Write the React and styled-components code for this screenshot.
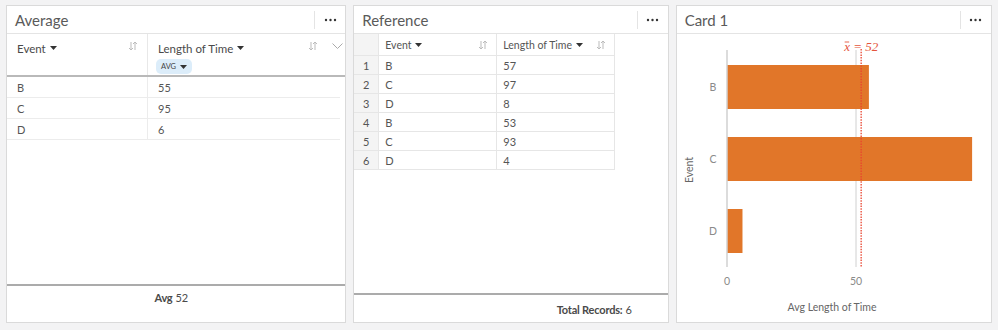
import React from "react";
import styled, { createGlobalStyle } from "styled-components";

const Global = createGlobalStyle`
  html, body { margin: 0; padding: 0; background: #f3f3f4; }
  body { font-family: Lato, "Open Sans", sans-serif; color: #4c4c4c; }
  * { box-sizing: border-box; }
`;

const Page = styled.div`
  display: flex;
  gap: 7px;
  padding: 5px 6px 0 6px;
  height: 330px;
`;

const Card = styled.section`
  width: ${(p) => p.$w}px;
  height: 318px;
  background: #fff;
  border: 1px solid #dadada;
  display: flex;
  flex-direction: column;
  overflow: hidden;
`;

const Header = styled.header`
  height: 28px;
  flex: none;
  display: flex;
  align-items: center;
  border-bottom: 1px solid #e4e4e4;
  padding-left: 8px;
`;

const Title = styled.h2`
  flex: 1;
  margin: 0;
  font-size: 15px;
  font-weight: 400;
  color: #5a5a5a;
`;

const MenuBtn = styled.div`
  width: 31px;
  height: 18px;
  border-left: 1px solid #e4e4e4;
  display: flex;
  align-items: center;
  justify-content: center;
`;

const Dots = () => (
  <svg width="13" height="4" viewBox="0 0 13 4">
    <circle cx="2" cy="2" r="1.2" fill="#333" />
    <circle cx="6.5" cy="2" r="1.2" fill="#333" />
    <circle cx="11" cy="2" r="1.2" fill="#333" />
  </svg>
);

const Caret = () => (
  <svg width="7" height="4" viewBox="0 0 7 4" style={{ marginLeft: 4 }}>
    <path d="M0 0 L7 0 L3.5 4 Z" fill="#333" />
  </svg>
);

const SortIcon = () => (
  <svg width="10" height="10" viewBox="0 0 10 10">
    <path d="M3 1 V9 M1 7 L3 9 L5 7" stroke="#bbb" strokeWidth="1" fill="none" />
    <path d="M7 9 V1 M5 3 L7 1 L9 3" stroke="#bbb" strokeWidth="1" fill="none" />
  </svg>
);

const Chevron = () => (
  <svg width="11" height="7" viewBox="0 0 11 7">
    <path d="M0.5 0.5 L5.5 5.5 L10.5 0.5" stroke="#aaa" strokeWidth="1" fill="none" />
  </svg>
);

const Body = styled.div`
  flex: 1;
  min-height: 0;
  display: flex;
  flex-direction: column;
`;

/* ---------- Summary table ---------- */
const SumHead = styled.div`
  display: grid;
  grid-template-columns: 141px 1fr;
  height: 43px;
  border-bottom: 2px solid #b9b9b9;
`;

const SumHeadCell = styled.div`
  position: relative;
  padding: 6px 8px 0 10px;
  border-right: ${(p) => (p.$last ? "none" : "1px solid #e8e8e8")};
  font-size: 11.5px;
  color: #4a4a4a;
`;

const HeadLabel = styled.div`
  display: flex;
  align-items: center;
  height: 16px;
`;

const HeadIcons = styled.div`
  position: absolute;
  top: 7px;
  right: ${(p) => p.$right}px;
  display: flex;
  align-items: center;
  gap: 14px;
`;

const AggPill = styled.span`
  display: inline-flex;
  align-items: center;
  margin-top: 3px;
  margin-left: -2px;
  padding: 0 5px;
  height: 15px;
  border-radius: 5px;
  background: #dcedfa;
  font-size: 7.5px;
  color: #444;
`;

const SumRows = styled.div`
  width: 333px;
`;

const SumRow = styled.div`
  display: grid;
  grid-template-columns: 141px 1fr;
  height: 21px;
  border-bottom: 1px solid #ececec;
  font-size: 11px;
  color: #555;
`;

const SumCell = styled.div`
  display: flex;
  align-items: center;
  padding-left: 10px;
  border-right: ${(p) => (p.$last ? "none" : "1px solid #ececec")};
`;

const Spacer = styled.div`
  flex: 1;
`;

const Footer = styled.footer`
  flex: none;
  height: ${(p) => p.$h}px;
  border-top: 2px solid #ababab;
  display: flex;
  justify-content: ${(p) => p.$justify};
  align-items: ${(p) => p.$align};
  padding: ${(p) => p.$pad};
  font-size: 11px;
  color: #4a4a4a;
  letter-spacing: -0.2px;
`;

const Strong = styled.b`
  font-weight: 700;
  margin-right: 3px;
`;

/* ---------- Reference table ---------- */
const RefTable = styled.div`
  display: grid;
  grid-template-columns: 25px 118px 118px;
  width: 262px;
`;

const RefCell = styled.div`
  position: relative;
  height: ${(p) => (p.$head ? 22 : 19)}px;
  display: flex;
  align-items: center;
  padding-left: ${(p) => (p.$num ? 0 : 6)}px;
  justify-content: ${(p) => (p.$num ? "center" : "flex-start")};
  background: ${(p) => (p.$num ? "#f4f4f4" : "#fff")};
  border-bottom: 1px solid #e6e6e6;
  border-right: 1px solid #e6e6e6;
  font-size: ${(p) => (p.$head ? 10.5 : 11)}px;
  color: #555;
`;

const RefSort = styled.span`
  position: absolute;
  right: 8px;
  top: 6px;
  display: flex;
`;

/* ---------- Chart ---------- */
const ChartSvg = styled.svg`
  display: block;
  font-family: Lato, "Open Sans", sans-serif;
`;

const summary = [
  ["B", 55],
  ["C", 95],
  ["D", 6],
];
const refRows = [
  ["B", 57],
  ["C", 97],
  ["D", 8],
  ["B", 53],
  ["C", 93],
  ["D", 4],
];

const X0 = 50;
const SCALE = 2.58;
const barTops = [31, 103, 175];

function Chart() {
  const avgX = X0 + 52 * SCALE;
  const gridX = X0 + 50 * SCALE;
  return (
    <ChartSvg width="315" height="287" viewBox="0 0 315 287">
      <line x1={gridX} y1="16" x2={gridX} y2="233" stroke="#d0d0d0" strokeWidth="1" />
      {summary.map(([k, v], i) => (
        <rect key={k} x={X0} y={barTops[i]} width={v * SCALE} height="44" fill="#e17629" />
      ))}
      <line x1={X0} y1="16" x2={X0} y2="233" stroke="#d0d0d0" strokeWidth="1.5" />
      <line
        x1={avgX}
        y1="15"
        x2={avgX}
        y2="233"
        stroke="#e8442f"
        strokeWidth="1.3"
        strokeDasharray="1.5 1.2"
      />
      <text
        x={avgX - 17}
        y="17"
        fontFamily='"Liberation Serif", serif'
        fontStyle="italic"
        fontSize="13"
        fill="#e4553d"
      >
        x = 52
      </text>
      <line x1={avgX - 16.5} y1="8" x2={avgX - 12} y2="8" stroke="#e4553d" strokeWidth="0.9" />
      {summary.map(([k], i) => (
        <text key={k} x="36" y={barTops[i] + 26} textAnchor="middle" fontSize="10.5" fill="#8a8a8a">
          {k}
        </text>
      ))}
      <text x={X0} y="251" textAnchor="middle" fontSize="10.5" fill="#8a8a8a">0</text>
      <text x={gridX} y="251" textAnchor="middle" fontSize="10.5" fill="#8a8a8a">50</text>
      <text x="155" y="277" textAnchor="middle" fontSize="10.5" fill="#666">
        Avg Length of Time
      </text>
      <text
        x="0"
        y="0"
        transform="translate(16 136) rotate(-90)"
        textAnchor="middle"
        fontSize="10.5"
        fill="#666"
      >
        Event
      </text>
    </ChartSvg>
  );
}

export default function App() {
  return (
    <>
      <Global />
      <Page>
        <Card $w={341}>
          <Header>
            <Title>Average</Title>
            <MenuBtn>
              <Dots />
            </MenuBtn>
          </Header>
          <Body>
            <SumHead>
              <SumHeadCell>
                <HeadLabel>
                  Event
                  <Caret />
                </HeadLabel>
                <HeadIcons $right={9}>
                  <SortIcon />
                </HeadIcons>
              </SumHeadCell>
              <SumHeadCell $last>
                <HeadLabel>
                  Length of Time
                  <Caret />
                </HeadLabel>
                <AggPill>
                  AVG
                  <Caret />
                </AggPill>
                <HeadIcons $right={2}>
                  <SortIcon />
                  <Chevron />
                </HeadIcons>
              </SumHeadCell>
            </SumHead>
            <SumRows>
              {summary.map(([k, v]) => (
                <SumRow key={k}>
                  <SumCell>{k}</SumCell>
                  <SumCell $last>{v}</SumCell>
                </SumRow>
              ))}
            </SumRows>
            <Spacer />
            <Footer $h={38} $justify="center" $align="flex-start" $pad="5px 10px 0 0">
              <Strong>Avg</Strong>52
            </Footer>
          </Body>
        </Card>

        <Card $w={316}>
          <Header>
            <Title>Reference</Title>
            <MenuBtn>
              <Dots />
            </MenuBtn>
          </Header>
          <Body>
            <RefTable>
              <RefCell $head $num />
              <RefCell $head>
                Event
                <Caret />
                <RefSort>
                  <SortIcon />
                </RefSort>
              </RefCell>
              <RefCell $head>
                Length of Time
                <Caret />
                <RefSort>
                  <SortIcon />
                </RefSort>
              </RefCell>
              {refRows.map(([k, v], i) => (
                <React.Fragment key={i}>
                  <RefCell $num>{i + 1}</RefCell>
                  <RefCell>{k}</RefCell>
                  <RefCell>{v}</RefCell>
                </React.Fragment>
              ))}
            </RefTable>
            <Spacer />
            <Footer $h={29} $justify="flex-end" $align="center" $pad="2px 36px 0 0">
              <Strong>Total Records:</Strong>6
            </Footer>
          </Body>
        </Card>

        <Card $w={317}>
          <Header>
            <Title>Card 1</Title>
            <MenuBtn>
              <Dots />
            </MenuBtn>
          </Header>
          <Body>
            <Chart />
          </Body>
        </Card>
      </Page>
    </>
  );
}
